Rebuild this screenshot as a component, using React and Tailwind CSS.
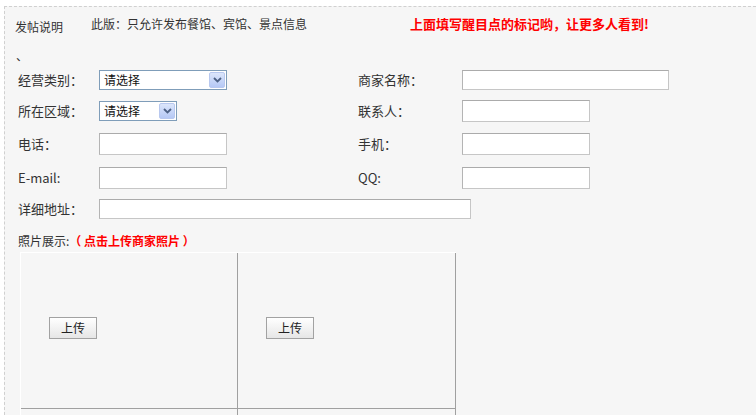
import React from "react";

const font = { fontFamily: '"Noto Sans CJK SC", "Noto Sans", sans-serif' };

const Input = ({ w, h = "h-[22px]" }) => (
  <div
    className={`${w} ${h} bg-white border border-[#c6c6c6] border-t-[#ababab] border-l-[#b4b4b4]`}
  ></div>
);

const Select = ({ w }) => (
  <div
    className={`${w} h-[20px] bg-white border border-[#7f9db9] flex items-center justify-between pl-[4px] pr-[1px]`}
  >
    <span className="text-[12px] leading-none text-[#111]">请选择</span>
    <span className="w-[16px] h-[16px] rounded-[2px] border border-[#b8c8ef] bg-gradient-to-b from-[#dce6fb] to-[#b5c8f5] flex items-center justify-center">
      <svg width="9" height="6" viewBox="0 0 9 6">
        <path d="M1 1 L4.5 4.5 L8 1" fill="none" stroke="#4d6185" strokeWidth="1.8" />
      </svg>
    </span>
  </div>
);

const Label = ({ children, w }) => (
  <div className={`${w} shrink-0 text-[13px] leading-none text-[#333]`}>{children}</div>
);

const Row = ({ h, left, right }) => (
  <div className={`${h} flex items-center`}>
    <div className="w-[340px] flex items-center">{left}</div>
    {right && <div className="flex items-center">{right}</div>}
  </div>
);

const UploadCell = ({ empty }) => (
  <div className="h-[156px] flex items-center pl-[28px] pb-[6px] border-r border-b border-[#a0a0a0]">
    {!empty && (
      <button className="w-[48px] h-[22px] border border-[#a2a2a2] bg-gradient-to-b from-white to-[#e6e6e6] text-[12px] leading-none text-[#222]">
        上传
      </button>
    )}
  </div>
);

export default function App() {
  return (
    <div className="w-[756px] h-[415px] overflow-hidden bg-white" style={font}>
      <div className="mt-[6px] ml-[4px] h-[409px] border-t border-l border-dashed border-[#d0d0d0] bg-[#f6f6f6]">
        {/* header */}
        <div className="flex items-start pt-[9px] pl-[10px] text-[12px] leading-[16px] text-[#333]">
          <div className="w-[76px] mt-[3px]">发帖说明</div>
          <div className="w-[319px]">此版：只允许发布餐馆、宾馆、景点信息</div>
          <div className="font-bold text-[13px] text-[#f00]">上面填写醒目点的标记哟，让更多人看到!</div>
        </div>
        <div className="mt-[13px] pl-[11px] h-[16px] text-[12px] leading-[16px] text-[#333]">、</div>

        {/* form */}
        <div className="pl-[13px]">
          <Row
            h="h-[31px]"
            left={
              <>
                <Label w="w-[81px]">经营类别：</Label>
                <Select w="w-[128px]" />
              </>
            }
            right={
              <>
                <Label w="w-[104px]">商家名称：</Label>
                <Input w="w-[207px]" h="h-[20px]" />
              </>
            }
          />
          <Row
            h="h-[31px]"
            left={
              <>
                <Label w="w-[81px]">所在区域：</Label>
                <Select w="w-[78px]" />
              </>
            }
            right={
              <>
                <Label w="w-[104px]">联系人：</Label>
                <Input w="w-[128px]" />
              </>
            }
          />
          <Row
            h="h-[35px]"
            left={
              <>
                <Label w="w-[81px]">电话：</Label>
                <Input w="w-[128px]" />
              </>
            }
            right={
              <>
                <Label w="w-[104px]">手机：</Label>
                <Input w="w-[128px]" />
              </>
            }
          />
          <Row
            h="h-[33px]"
            left={
              <>
                <Label w="w-[81px]">E-mail:</Label>
                <Input w="w-[128px]" />
              </>
            }
            right={
              <>
                <Label w="w-[104px]">QQ:</Label>
                <Input w="w-[128px]" />
              </>
            }
          />
          <div className="h-[29px] flex items-center">
            <Label w="w-[81px]">详细地址：</Label>
            <Input w="w-[372px]" h="h-[20px]" />
          </div>
          <div className="h-[29px] flex items-center pt-[7px] text-[12px] leading-none text-[#333]">
            照片展示:
            <span className="font-bold text-[#f00]">（ 点击上传商家照片 ）</span>
          </div>
        </div>

        {/* photo table */}
        <div className="ml-[15px] w-[436px] border-t border-l border-white grid grid-cols-[217px_218px]">
          <UploadCell />
          <UploadCell />
          <UploadCell empty />
          <UploadCell empty />
        </div>
      </div>
    </div>
  );
}
